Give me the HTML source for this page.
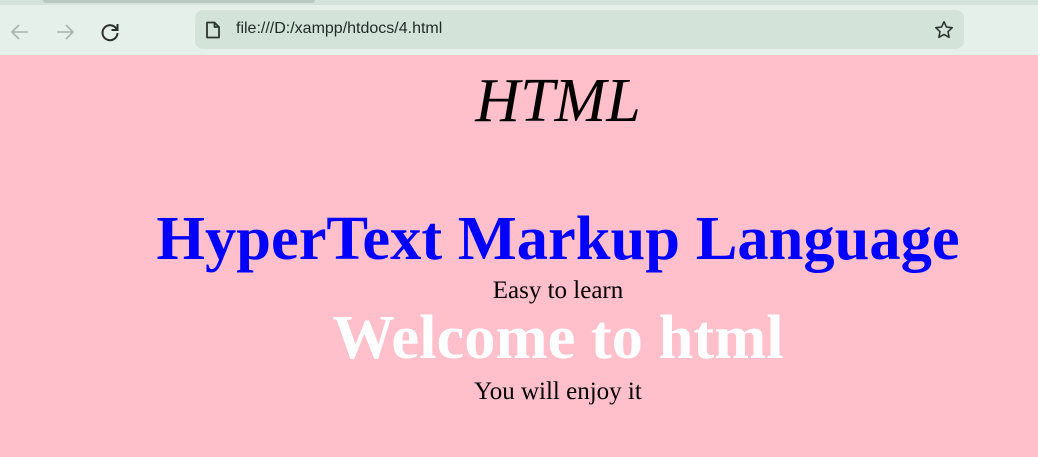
<!DOCTYPE html>
<html><head><style>
body{margin:0;width:1038px;height:457px;overflow:hidden;background:#ffc0cb;position:relative;font-family:"Liberation Serif",serif}
.top{position:absolute;left:0;top:0;width:1038px;height:5px;background:#d3e3dc}
.tab{position:absolute;left:43px;top:0;width:272px;height:3px;background:#b9c9c2;border-radius:0 0 4px 4px}
.bar{position:absolute;left:0;top:5px;width:1038px;height:50px;background:#e6f0eb}
.url{position:absolute;left:195px;top:10px;width:769px;height:39px;background:#d3e3da;border-radius:8px}
.url span{position:absolute;left:41px;top:10px;font:16px "Liberation Sans",sans-serif;color:#1f2a25}
.t{position:absolute;left:0;width:1116px;text-align:center;line-height:1;white-space:nowrap}
</style></head><body>
<div class="top"></div><div class="tab"></div>
<div class="bar"></div>
<svg style="position:absolute;left:8px;top:20px" width="24" height="24" viewBox="0 0 24 24"><path d="M20 12H5M11 5l-7 7 7 7" fill="none" stroke="#a9b3ae" stroke-width="1.6"/></svg>
<svg style="position:absolute;left:53px;top:20px" width="24" height="24" viewBox="0 0 24 24"><path d="M4 12h15M13 5l7 7-7 7" fill="none" stroke="#a9b3ae" stroke-width="1.6"/></svg>
<svg style="position:absolute;left:98px;top:20px" width="24" height="24" viewBox="0 0 24 24"><path d="M18.5 9A7.5 7.5 0 1 0 19.5 13" fill="none" stroke="#2b2f2d" stroke-width="2"/><path d="M19.5 4v6h-6" fill="none" stroke="#2b2f2d" stroke-width="2"/></svg>
<div class="url"><span>file:///D:/xampp/htdocs/4.html</span></div>
<svg style="position:absolute;left:205px;top:21px" width="16" height="18" viewBox="0 0 16 18"><path d="M2 1.5h7.5l4.5 4.5v10.5H2z M9.5 1.5V6H14" fill="none" stroke="#2b3530" stroke-width="1.8" stroke-linejoin="round"/></svg>
<svg style="position:absolute;left:933px;top:19px" width="22" height="22" viewBox="0 0 24 24"><path d="M12 3l2.7 5.8 6.3.7-4.7 4.3 1.3 6.2L12 16.9 6.4 20l1.3-6.2L3 9.5l6.3-.7z" fill="none" stroke="#2b3530" stroke-width="1.7" stroke-linejoin="round"/></svg>
<div class="t" style="top:70px;font-size:62px;font-style:italic">HTML</div>
<div class="t" style="top:207px;font-size:62.5px;font-weight:bold;color:#0000ff">HyperText Markup Language</div>
<div class="t" style="top:278px;font-size:25px">Easy to learn</div>
<div class="t" style="top:306px;font-size:62.5px;font-weight:bold;color:#fff">Welcome to html</div>
<div class="t" style="top:379px;font-size:25px">You will enjoy it</div>
</body></html>
